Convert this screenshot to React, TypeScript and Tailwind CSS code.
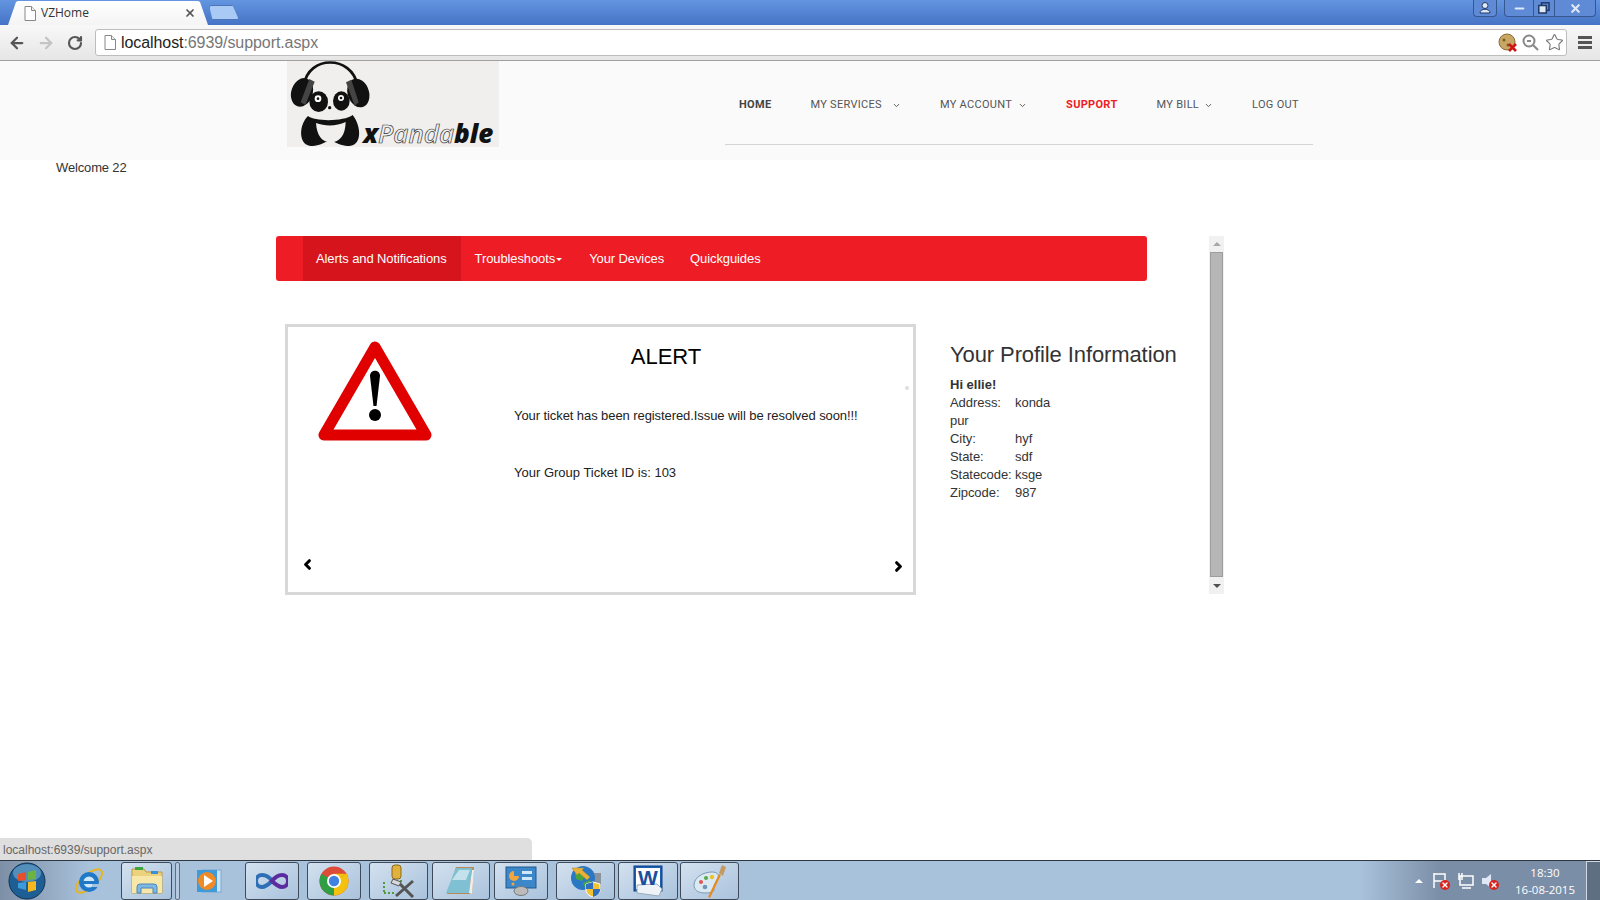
import React from "react";
import { ArrowLeft, ArrowRight, RotateCw, ChevronDown, ChevronLeft, ChevronRight, X, Star, Minus } from "lucide-react";

const DocIcon = () => (
  <svg width="12" height="15" viewBox="0 0 12 15" fill="none">
    <path d="M1 .5h6.5l4 4v10H1z" fill="#fff" stroke="#888" />
    <path d="M7.5.5v4h4" fill="#eee" stroke="#888" />
  </svg>
);

const PandaLogo = () => (
  <svg width="212" height="86" viewBox="21 18 636 258" className="block overflow-visible">
    <rect x="21" y="18" width="636" height="258" fill="#f0efed" />
    <path d="M72 90C85 0 215 0 232 90" fill="none" stroke="#111" strokeWidth="8" />
    <ellipse cx="66" cy="112" rx="32" ry="44" transform="rotate(18 66 112)" fill="#111" />
    <ellipse cx="235" cy="114" rx="32" ry="44" transform="rotate(-18 235 114)" fill="#111" />
    <path d="M88 72l16 8-28 70-14-8z" fill="#444" />
    <path d="M214 74l-16 8 26 70 12-10z" fill="#444" />
    <ellipse cx="116" cy="140" rx="28" ry="31" fill="#111" />
    <ellipse cx="184" cy="138" rx="25" ry="29" fill="#111" />
    <circle cx="114" cy="131" r="10" fill="#fff" />
    <circle cx="114" cy="131" r="4" fill="#111" />
    <circle cx="183" cy="129" r="9" fill="#fff" />
    <circle cx="183" cy="129" r="4" fill="#111" />
    <circle cx="149" cy="158" r="5" fill="#111" />
    <path d="M84 183C104 200 192 200 218 180C245 215 245 268 212 272C190 276 170 264 150 256C130 264 112 276 88 272C56 266 56 210 84 183Z" fill="#111" />
    <path d="M108 204C135 214 170 214 197 201C196 240 180 262 152 262C126 262 110 240 108 204Z" fill="#f0efed" />
    <text x="250" y="264" fontFamily="'Open Sans',sans-serif" fontStyle="italic" fontSize="78" fontWeight="800" fill="#111">
      x<tspan fill="#eee" stroke="#333" strokeWidth="2" fontWeight="600">Panda</tspan>ble
    </text>
  </svg>
);

const WarningSign = () => (
  <svg width="114" height="102" viewBox="0 0 114 102" className="block">
    <path d="M57 7L6 95h102z" fill="#fff" stroke="#e10000" strokeWidth="11" strokeLinejoin="round" />
    <path d="M52 36c0-7 10-7 10 0l-3.500 30h-3z" fill="#000" />
    <circle cx="57" cy="75" r="6" fill="#000" />
  </svg>
);

const CookieBlocked = () => (
  <svg width="20" height="20" viewBox="0 0 20 20">
    <circle cx="9" cy="9" r="8" fill="#c8a765" stroke="#8a6d35" />
    <circle cx="6" cy="7" r="1.5" fill="#7a5b22" />
    <circle cx="10" cy="12" r="1.500" fill="#7a5b22" />
    <path d="M11 11l7 7M18 11l-7 7" stroke="#d01515" strokeWidth="2.600" />
  </svg>
);

const WinOrb = () => (
  <svg width="38" height="38" viewBox="0 0 38 38">
    <circle cx="19" cy="19" r="18" fill="#1d5f95" stroke="#12324f" />
    <ellipse cx="19" cy="11" rx="14" ry="9" fill="#7fb6d9" opacity=".55" />
    <path d="M10 12l8-2v8l-8 1z" fill="#e8502c" />
    <path d="M20 10l8-2v9l-8 1z" fill="#6cb33f" />
    <path d="M10 21l8-1v8l-8-2z" fill="#3e9bd9" />
    <path d="M20 20l8-1v9l-8 2z" fill="#f5b81f" />
  </svg>
);

const IeIcon = () => (
  <svg width="32" height="32" viewBox="0 0 32 32" fill="none">
    <ellipse cx="16" cy="16" rx="16" ry="7" transform="rotate(-40 16 16)" stroke="#e6b422" strokeWidth="2" />
    <circle cx="16" cy="17" r="10" fill="#1f78c8" />
    <circle cx="16" cy="17" r="5.500" fill="#cfe7f7" />
    <rect x="9" y="16" width="14" height="3" fill="#1f78c8" />
    <rect x="19" y="19" width="8" height="3" fill="#a9c2dc" />
  </svg>
);

const FolderIcon = () => (
  <svg width="32" height="30" viewBox="0 0 32 30">
    <path d="M1 3h12l2 3h16v21H1z" fill="#ecd27c" stroke="#b99b45" />
    <rect x="4" y="1" width="8" height="3" fill="#3ca53c" />
    <rect x="20" y="5" width="7" height="3" fill="#3b8fd6" />
    <path d="M1 10h30v17H1z" fill="#f7e7a8" />
    <path d="M6 27v-6a3 3 0 013-3h14a3 3 0 013 3v6h-4v-5H10v5z" fill="#7fb8e4" stroke="#4b87b8" />
  </svg>
);

const MediaIcon = () => (
  <svg width="28" height="28" viewBox="0 0 28 28">
    <rect x="7" y="3" width="19" height="22" fill="#cde3f5" stroke="#7fa8cc" />
    <rect x="2" y="3" width="20" height="22" fill="#3e9ad8" />
    <circle cx="12" cy="14" r="9" fill="#f08a24" />
    <path d="M9 8l9 6-9 6z" fill="#fff" />
  </svg>
);

const VsIcon = () => (
  <svg width="32" height="18" viewBox="0 0 32 18" fill="none">
    <path d="M16 9C12 3 8 3 6 3a6 6 0 000 12c3 0 6-2 10-6z" stroke="#2f6fb5" strokeWidth="4" />
    <path d="M16 9c4-5 7-6 10-6a6 6 0 010 12c-3 0-6-2-10-6z" stroke="#5b2c9f" strokeWidth="4" />
  </svg>
);

const ChromeIcon = () => (
  <svg width="30" height="30" viewBox="0 0 30 30">
    <circle cx="15" cy="15" r="14.500" fill="#dd4b39" />
    <path d="M15 15L2.400 7.800A14.500 14.500 0 0015 29.500z" fill="#2f9e44" />
    <path d="M15 15v14.500A14.500 14.500 0 0027.600 7.800z" fill="#f4c20d" />
    <path d="M15 15L27.600 7.800H15z" fill="#f4c20d" />
    <circle cx="15" cy="15" r="7" fill="#fff" />
    <circle cx="15" cy="15" r="5.200" fill="#3f82e0" />
  </svg>
);

const ToolsIcon = () => (
  <svg width="34" height="34" viewBox="0 0 34 34" fill="none">
    <rect x="10" y="1" width="9" height="14" rx="3" fill="#e0b13c" stroke="#8c6a14" />
    <path d="M2 18v11M2 29h12M19 16v8" stroke="#4f9a3a" strokeWidth="2" strokeDasharray="2 2" />
    <path d="M14 32l17-15M16 18l15 15" stroke="#555" strokeWidth="3" />
    <path d="M11 15l8 3-2 4-8-3z" fill="#d9d9d9" stroke="#555" />
  </svg>
);

const NotesIcon = () => (
  <svg width="32" height="30" viewBox="0 0 32 30">
    <path d="M11 1h18l-2 27H2z" fill="#b9895a" />
    <path d="M11 2h16l-3 25H1z" fill="#7fc0d3" />
    <path d="M14 4h11l-4 10H7z" fill="#c3e2eb" />
    <path d="M24 27l3-23 2 0-2 24z" fill="#eee" />
  </svg>
);

const PanelIcon = () => (
  <svg width="32" height="30" viewBox="0 0 32 30">
    <rect x="1" y="1" width="30" height="21" fill="#3b87c9" stroke="#22598c" />
    <path d="M9 5a5 5 0 105 5H9z" fill="#f3a53b" />
    <rect x="17" y="5" width="10" height="3" fill="#cfe7f7" />
    <rect x="17" y="11" width="10" height="3" fill="#cfe7f7" />
    <circle cx="8" cy="18" r="1.500" fill="#f3a53b" />
    <ellipse cx="16" cy="25" rx="7" ry="4.500" fill="#bbb" stroke="#777" />
  </svg>
);

const ShieldGlobeIcon = () => (
  <svg width="32" height="32" viewBox="0 0 32 32">
    <rect x="18" y="8" width="13" height="17" fill="#8b949c" />
    <circle cx="13" cy="13" r="12" fill="#2a78c4" />
    <path d="M5 8l7-3 4 5-4 6-6-2zM13 18l7-3 2 6-6 4z" fill="#46a63d" />
    <path d="M2 3h12l-2 2 8 7-3 3-8-7-2 2z" fill="#e8b23a" stroke="#b08220" strokeWidth=".5" />
    <path d="M23 17l7 2v6c0 3-3 6-7 7-4-1-7-4-7-7v-6z" fill="#f2c230" stroke="#fff" />
    <path d="M23 17v7h-7v-5zM23 24h7v1c0 3-3 6-7 7z" fill="#2e6fc0" />
  </svg>
);

const WordIcon = () => (
  <svg width="30" height="32" viewBox="0 0 30 32">
    <rect x="1" y="1" width="28" height="25" fill="#1a5fb4" stroke="#0f3f7f" />
    <rect x="3" y="3" width="24" height="21" fill="#fff" />
    <path d="M4 20l20-1 5 5-3 7-22-3z" fill="#eef3f8" stroke="#9ab" />
    <text x="15" y="20" textAnchor="middle" fontFamily="'Liberation Sans',sans-serif" fontWeight="700" fontSize="21" fill="#1a4fa0">W</text>
  </svg>
);

const PaletteIcon = () => (
  <svg width="34" height="34" viewBox="0 0 34 34">
    <path d="M1 21c0-8 10-13 18-13 6 0 8 4 5 8-3 5-4 7-3 9 1 3-4 4-9 4-7 0-11-3-11-8z" fill="#dbe9f2" stroke="#7a9ab0" />
    <circle cx="8" cy="18" r="2" fill="#e0574f" />
    <circle cx="13" cy="14" r="2" fill="#55a947" />
    <circle cx="19" cy="13" r="2.200" fill="#e8c42d" />
    <circle cx="12" cy="23" r="2.300" fill="#6f96b8" />
    <path d="M15 33L26 10l2 1-11 23z" fill="#e88a20" />
    <path d="M26 9l3-8 4 2-3 9z" fill="#c49a63" />
  </svg>
);

const TaskBtn = ({ w, ml, children }: { w: number; ml: number; children: React.ReactNode }) => (
  <div
    style={{ width: w, marginLeft: ml }}
    className="h-[38px] flex items-center justify-center rounded-[3px] border border-[#3f4b5a] bg-gradient-to-br from-[#d3e1ef] to-[#a9c2dc] shrink-0"
  >
    {children}
  </div>
);

const Sep = ({ ml }: { ml: number }) => <div style={{ marginLeft: ml }} className="w-[5px] h-[38px] rounded-[2px] border border-[#5f6f82] bg-[#b4c9df] shrink-0" />;

const ErrorDot = () => (
  <span className="absolute -right-[2px] -bottom-[1px] w-[10px] h-[10px] rounded-full bg-[#d9231c] text-white flex items-center justify-center">
    <X size={8} strokeWidth={4} />
  </span>
);

const navItems = [
  { label: "HOME", cls: "font-bold text-[#444]" },
  { label: "MY SERVICES", cls: "text-[#555]", chevron: "ml-[10px]" },
  { label: "MY ACCOUNT", cls: "text-[#555]", chevron: "ml-[6px]" },
  { label: "SUPPORT", cls: "font-bold text-[#ee1c25]" },
  { label: "MY BILL", cls: "text-[#555]", chevron: "ml-[5px]" },
  { label: "LOG OUT", cls: "text-[#555]" },
];

const profile = [
  ["Address:", "konda"],
  ["pur", ""],
  ["City:", "hyf"],
  ["State:", "sdf"],
  ["Statecode:", "ksge"],
  ["Zipcode:", "987"],
];

export default function App() {
  return (
    <div className="relative h-[900px] w-[1600px] overflow-hidden bg-white flex flex-col font-['Liberation_Sans',Arial,sans-serif]">
      {/* browser tabs */}
      <div className="h-[25px] shrink-0 flex items-end bg-gradient-to-b from-[#6395e0] to-[#4673c6]">
        <div className="ml-[8px] w-[200px] h-[24px] flex items-center pl-[16px] pr-[12px] bg-gradient-to-b from-white to-[#f4f4f4] [clip-path:polygon(0_100%,8px_4%,10px_0,190px_0,192px_4%,200px_100%)]">
          <DocIcon />
          <span className="ml-[5px] text-[12px] text-[#333] font-['Open_Sans',sans-serif]">VZHome</span>
          <X size={12} strokeWidth={3.5} className="ml-auto text-[#555]" />
        </div>
        <div className="ml-[1px] mb-[5px] w-[30px] h-[15px] bg-[#a9caf5] border border-[#4a76b8] rounded-[2px] [clip-path:polygon(0_0,78%_0,100%_100%,12%_100%)]" />
        <div className="ml-auto mr-[4px] self-start flex text-[#1f3a66]">
          <div className="w-[24px] h-[17px] flex items-center justify-center rounded-b-[4px] border border-t-0 border-[#37588f] bg-[#5f8ad6]">
            <svg width="12" height="12" viewBox="0 0 12 12">
              <circle cx="6" cy="3.500" r="3" fill="#dfe8f5" stroke="#1f3a66" />
              <path d="M1 11c0-5 10-5 10 0z" fill="#dfe8f5" stroke="#1f3a66" />
            </svg>
          </div>
          <div className="ml-[7px] flex h-[17px] rounded-b-[4px] border border-t-0 border-[#37588f] bg-[#5f8ad6] divide-x divide-[#37588f]">
            <div className="w-[29px] flex items-center justify-center">
              <Minus size={13} strokeWidth={4} className="text-[#dfe8f5]" />
            </div>
            <div className="w-[21px] flex items-center justify-center">
              <svg width="12" height="12" viewBox="0 0 12 12" fill="none" stroke="#1f3a66" strokeWidth="1.500">
                <rect x="3.500" y=".8" width="7.500" height="7.500" />
                <rect x=".8" y="3.500" width="7.500" height="7.500" fill="#dfe8f5" />
              </svg>
            </div>
            <div className="w-[40px] flex items-center justify-center">
              <X size={13} strokeWidth={4} className="text-[#dfe8f5]" />
            </div>
          </div>
        </div>
      </div>

      {/* toolbar */}
      <div className="h-[36px] shrink-0 flex items-center border-b border-[#a0a0a0] bg-gradient-to-b from-[#f8f8f8] to-[#e6e6e6]">
        <ArrowLeft size={18} strokeWidth={3} className="ml-[8px] text-[#555]" />
        <ArrowRight size={18} strokeWidth={3} className="ml-[11px] text-[#c4c4c4]" />
        <RotateCw size={16} strokeWidth={3.2} className="ml-[12px] text-[#555]" />
        <div className="ml-[12px] w-[1472px] h-[27px] flex items-center pl-[8px] pr-[2px] bg-white border border-[#bdbdbd] rounded-[3px]">
          <DocIcon />
          <span className="ml-[5px] text-[16px] tracking-[-0.08px] text-[#222]">
            localhost<span className="text-[#777]">:6939/support.aspx</span>
          </span>
          <span className="ml-auto flex items-center gap-[4px]">
            <span className="mr-[-2px] ml-[3px]"><CookieBlocked /></span>
            <svg width="17" height="17" viewBox="0 0 17 17" fill="none" stroke="#888" strokeWidth="2" className="ml-[2px]">
              <circle cx="7" cy="7" r="5.500" />
              <path d="M11 11l5 5M5 7h4" />
            </svg>
            <Star size={19} strokeWidth={1.4} className="text-[#777] ml-[2px]" />
          </span>
        </div>
        <div className="ml-[11px] flex flex-col gap-[2px]">
          <span className="block w-[14px] h-[3px] bg-[#555]" />
          <span className="block w-[14px] h-[3px] bg-[#555]" />
          <span className="block w-[14px] h-[3px] bg-[#555]" />
        </div>
      </div>

      {/* page */}
      <div className="relative flex-1 min-h-0">
        <header className="h-[99px] flex pl-[287px] bg-[#fafafa]">
          <div>
            <PandaLogo />
          </div>
          <nav className="ml-[226px] w-[588px] h-[84px] flex items-center gap-[39px] pl-[14px] pt-[5px] border-b border-[#d4d4d4] font-['Roboto',sans-serif] text-[11px] tracking-[0.3px]">
            {navItems.map((item) => (
              <span key={item.label} className={`flex items-center ${item.cls}`}>
                {item.label}
                {item.chevron && <ChevronDown size={9} strokeWidth={2.5} className={item.chevron} />}
              </span>
            ))}
          </nav>
        </header>

        <p className="pl-[56px] pt-[1px] text-[13px] leading-[14px] tracking-[-0.15px] text-[#333]">Welcome 22</p>

        <div className="flex ml-[276px] mt-[61px]">
          <div className="w-[933px]">
            <div className="w-[871px] h-[45px] flex pl-[27px] rounded-[3px] bg-[#ee1c25] text-white text-[13px] tracking-[-0.1px]">
              <a className="flex items-center pl-[13px] pr-[14px] bg-[#d6141b]">Alerts and Notifications</a>
              <a className="flex items-center pl-[14px] pr-[14px]">
                Troubleshoots
                <span className="ml-[1px] mt-[2px] border-x-[3px] border-t-[3px] border-x-transparent border-t-white" />
              </a>
              <a className="flex items-center px-[13px]">Your Devices</a>
              <a className="flex items-center px-[13px]">Quickguides</a>
            </div>

            <div className="flex mt-[43px] ml-[9px]">
              <div className="relative w-[631px] h-[271px] flex border-[3px] border-[#d8d8d8]">
                <div className="ml-[30px] mt-[13px] w-[196px] shrink-0">
                  <WarningSign />
                </div>
                <div className="w-[350px]">
                  <h2 className="mt-[15px] w-[304px] text-center text-[22px] leading-[30px] text-black">ALERT</h2>
                  <p className="mt-[34px] text-[13px] leading-[20px] tracking-[-0.08px] text-[#222] whitespace-nowrap">
                    Your ticket has been registered.Issue will be resolved soon!!!
                  </p>
                  <p className="mt-[37px] text-[13px] leading-[20px] text-[#222]">Your Group Ticket ID is: 103</p>
                </div>
                <span className="absolute left-[617px] top-[59px] w-[4px] h-[4px] rounded-full bg-[#ddd]" />
                <ChevronLeft size={15} strokeWidth={5} className="absolute left-[12px] top-[230px] text-black" />
                <ChevronRight size={15} strokeWidth={5} className="absolute left-[603px] top-[232px] text-black" />
              </div>

              <div className="ml-[34px] text-[#333]">
                <h3 className="mt-[16px] text-[22px] tracking-[-0.1px] leading-[30px] whitespace-nowrap">Your Profile Information</h3>
                <p className="mt-[6px] text-[13px] leading-[18px] font-bold">Hi ellie!</p>
                {profile.map(([k, v]) => (
                  <div key={k} className="flex text-[13px] leading-[18px] tracking-[-0.05px]">
                    <span className="w-[65px]">{k}</span>
                    <span>{v}</span>
                  </div>
                ))}
              </div>
            </div>
          </div>

          <div className="w-[15px] h-[358px] flex flex-col items-center bg-[#f1f1f1]">
            <span className="mt-[6px] border-x-[4px] border-b-[4px] border-x-transparent border-b-[#a8a8a8]" />
            <span className="mt-[6px] w-[13px] h-[325px] bg-[#b6b6b6] border border-[#9c9c9c]" />
            <span className="mt-[7px] border-x-[4px] border-t-[4px] border-x-transparent border-t-[#505050]" />
          </div>
        </div>

        {/* status bubble */}
        <div className="absolute left-0 bottom-0 w-[532px] h-[22px] flex items-center pl-[3px] pt-[1px] rounded-tr-[5px] bg-[#dfdfdf] text-[12px] text-[#666]">
          localhost:6939/support.aspx
        </div>
      </div>

      {/* taskbar */}
      <div className="h-[40px] shrink-0 flex items-center border-t border-[#2f3742] bg-[linear-gradient(90deg,#7d8fa6_0,#a9c2dc_90px,#a9c2dc_1360px,#7b8ea7_1440px,#7b8ea7_100%)]">
        <div className="ml-[8px] shrink-0"><WinOrb /></div>
        <div className="ml-[27px] shrink-0"><IeIcon /></div>
        <TaskBtn w={51} ml={16}><FolderIcon /></TaskBtn>
        <Sep ml={3} />
        <div className="ml-[15px] shrink-0"><MediaIcon /></div>
        <TaskBtn w={54} ml={22}><VsIcon /></TaskBtn>
        <TaskBtn w={54} ml={8}><ChromeIcon /></TaskBtn>
        <TaskBtn w={59} ml={8}><ToolsIcon /></TaskBtn>
        <TaskBtn w={58} ml={4}><NotesIcon /></TaskBtn>
        <TaskBtn w={54} ml={4}><PanelIcon /></TaskBtn>
        <TaskBtn w={59} ml={8}><ShieldGlobeIcon /></TaskBtn>
        <TaskBtn w={60} ml={3}><WordIcon /></TaskBtn>
        <TaskBtn w={59} ml={2}><PaletteIcon /></TaskBtn>

        <div className="ml-auto flex items-center h-full text-white">
          <span className="border-x-[4px] border-b-[4px] border-x-transparent border-b-white" />
          <span className="relative ml-[9px]">
            <svg width="16" height="17" viewBox="0 0 16 17" fill="none" stroke="#fff" strokeWidth="1.500">
              <path d="M2 1v15M2 2h11v7H2" />
            </svg>
            <ErrorDot />
          </span>
          <span className="relative ml-[9px]">
            <svg width="17" height="17" viewBox="0 0 17 17" fill="none" stroke="#fff" strokeWidth="1.500">
              <rect x="3" y="4" width="13" height="9" />
              <path d="M5 16h9M2 1v7M5 1v7" />
            </svg>
          </span>
          <span className="relative ml-[7px]">
            <svg width="16" height="16" viewBox="0 0 16 16">
              <path d="M1 5h4l5-4v14l-5-4H1z" fill="#dfe8f5" />
            </svg>
            <ErrorDot />
          </span>
          <div className="ml-[13px] w-[70px] text-center text-[11.5px] leading-[17px] font-['Open_Sans',sans-serif]">
            <div>18:30</div>
            <div>16-08-2015</div>
          </div>
          <div className="ml-[6px] w-[14px] h-full border-l border-t border-[#cfd8e3] bg-[#5f6f82]" />
        </div>
      </div>
    </div>
  );
}
